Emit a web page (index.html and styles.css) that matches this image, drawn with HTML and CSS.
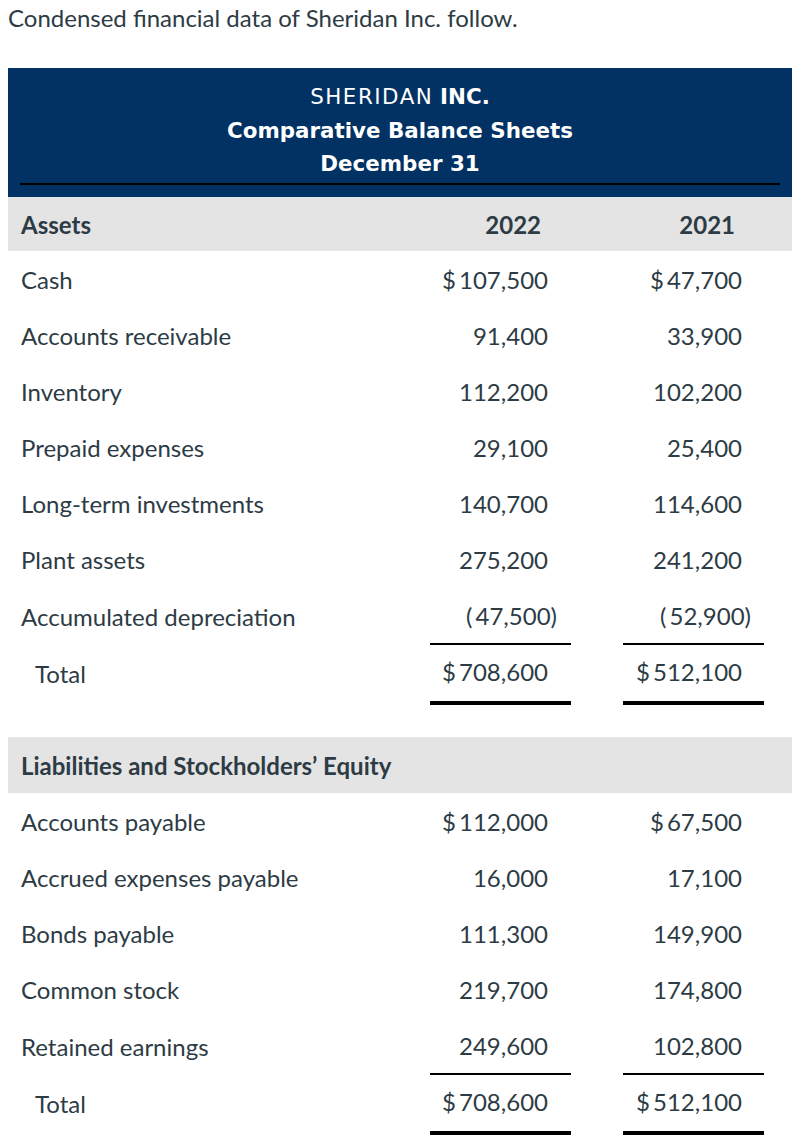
FILE: index.html
```html
<!DOCTYPE html>
<html>
<head>
<meta charset="utf-8">
<link rel="stylesheet" href="styles.css">
</head>
<body>
<p class="intro">Condensed financial data of Sheridan Inc. follow.</p>
<div class="sheet">
  <div class="banner">
    <div class="banner-text">
      <div class="line1"><span class="co">SHERIDAN</span> <b>INC.</b></div>
      <div class="line2"><b>Comparative Balance Sheets</b></div>
      <div class="line3"><b>December 31</b></div>
    </div>
    <div class="banner-rule"></div>
  </div>

  <div class="grid">
    <div class="row head">
      <div class="label">Assets</div>
      <div class="val year">2022</div>
      <div class="val year">2021</div>
    </div>
    <div class="row">
      <div class="label">Cash</div>
      <div class="val">$&thinsp;107,500</div>
      <div class="val">$&thinsp;47,700</div>
    </div>
    <div class="row">
      <div class="label">Accounts receivable</div>
      <div class="val">91,400</div>
      <div class="val">33,900</div>
    </div>
    <div class="row">
      <div class="label">Inventory</div>
      <div class="val">112,200</div>
      <div class="val">102,200</div>
    </div>
    <div class="row">
      <div class="label">Prepaid expenses</div>
      <div class="val">29,100</div>
      <div class="val">25,400</div>
    </div>
    <div class="row">
      <div class="label">Long-term investments</div>
      <div class="val">140,700</div>
      <div class="val">114,600</div>
    </div>
    <div class="row">
      <div class="label">Plant assets</div>
      <div class="val">275,200</div>
      <div class="val">241,200</div>
    </div>
    <div class="row ruled">
      <div class="label">Accumulated depreciation</div>
      <div class="val under">(&thinsp;47,500<span class="paren">)</span></div>
      <div class="val under">(&thinsp;52,900<span class="paren">)</span></div>
    </div>
    <div class="row total">
      <div class="label indent">Total</div>
      <div class="val double">$&thinsp;708,600</div>
      <div class="val double">$&thinsp;512,100</div>
    </div>

    <div class="row head section">
      <div class="label">Liabilities and Stockholders’ Equity</div>
      <div class="val"></div>
      <div class="val"></div>
    </div>
    <div class="row">
      <div class="label">Accounts payable</div>
      <div class="val">$&thinsp;112,000</div>
      <div class="val">$&thinsp;67,500</div>
    </div>
    <div class="row">
      <div class="label">Accrued expenses payable</div>
      <div class="val">16,000</div>
      <div class="val">17,100</div>
    </div>
    <div class="row">
      <div class="label">Bonds payable</div>
      <div class="val">111,300</div>
      <div class="val">149,900</div>
    </div>
    <div class="row">
      <div class="label">Common stock</div>
      <div class="val">219,700</div>
      <div class="val">174,800</div>
    </div>
    <div class="row ruled">
      <div class="label">Retained earnings</div>
      <div class="val under">249,600</div>
      <div class="val under">102,800</div>
    </div>
    <div class="row total">
      <div class="label indent">Total</div>
      <div class="val double">$&thinsp;708,600</div>
      <div class="val double">$&thinsp;512,100</div>
    </div>
  </div>
</div>
</body>
</html>
```

FILE: styles.css
```css
*, *::before, *::after {
  box-sizing: border-box;
}
html, body {
  margin: 0;
  padding: 0;
  background: #ffffff;
}
body {
  padding: 4px 0 0 8px;
  font-family: Lato, "Open Sans", sans-serif;
  font-size: 24px;
  color: #2d3b45;
}
.intro {
  margin: 0;
  line-height: 28px;
}
.sheet {
  margin-top: 36px;
  width: 784px;
}
.banner {
  background: #013263;
  color: #ffffff;
  padding: 12px 0 12px;
}
.banner-text {
  text-align: center;
  font-family: "DejaVu Sans", Verdana, sans-serif;
  font-size: 21.4px;
}
.banner-text b {
  font-weight: 700;
}
.line1 {
  line-height: 34px;
}
.line2 {
  line-height: 34px;
}
.line3 {
  line-height: 32px;
}
.co {
  letter-spacing: 1.5px;
}
.banner-rule {
  margin: 3px 12px 0;
  height: 2px;
  background: #000000;
}
.grid {
  display: flex;
  flex-direction: column;
}
.row {
  display: grid;
  grid-template-columns: 422px 141px 193px;
  height: 56px;
  align-items: stretch;
}
.row.head {
  background: #e4e4e4;
  font-weight: 700;
  height: 54px;
}
.row.section {
  margin-top: 32px;
  height: 56px;
}
.row.ruled {
  height: 58px;
}
.row.total {
  height: 60px;
}
.label {
  display: flex;
  align-items: center;
  padding-left: 13px;
  white-space: nowrap;
}
.label.indent {
  padding-left: 27px;
}
.val {
  display: flex;
  align-items: center;
  justify-content: flex-end;
  padding-right: 23px;
  white-space: nowrap;
}
.row.total .label,
.row.total .val {
  padding-bottom: 4px;
}
.row .val:last-child {
  margin-left: 52px;
  padding-right: 22px;
}
.row .val.year {
  padding-right: 30px;
}
.row .val.year:last-child {
  padding-right: 29px;
}
.paren {
  margin-right: -9px;
}
.val.under {
  border-bottom: 2px solid #000000;
}
.val.double {
  border-bottom: 4px solid #000000;
}
```
